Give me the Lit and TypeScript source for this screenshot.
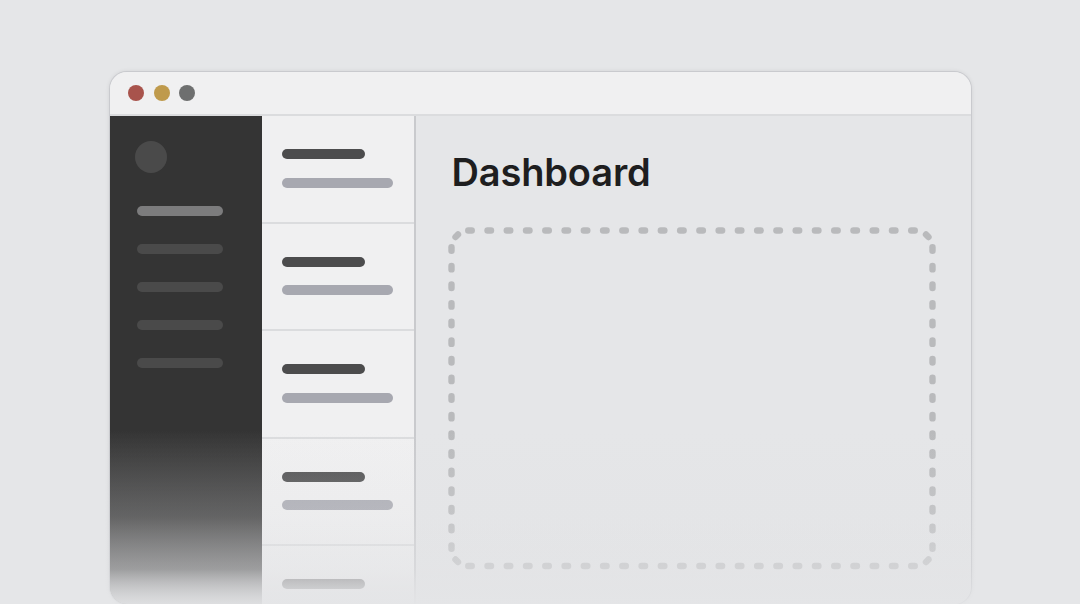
import { LitElement, html, css, svg } from "lit";
import { customElement } from "lit/decorators.js";

const range = (n: number) => Array.from({ length: n }, (_, i) => i);
const DASH = 1.75;

// Dashed frame: each side's dots are evenly spaced and each corner carries one diagonal dot.
const L = 3.5, R = 484.5, T = 3.5, B = 339;
const hx = range(24).map((i) => 22 + i * 19.26);
const vy = range(17).map((i) => 22 + i * 18.63);
const dots = [
  ...hx.flatMap((x) => [[x - DASH, T, x + DASH, T], [x - DASH, B, x + DASH, B]]),
  ...vy.flatMap((y) => [[L, y - DASH, L, y + DASH], [R, y - DASH, R, y + DASH]]),
  [7.5, 10, 10, 7.5],
  [478, 7.5, 480.5, 10],
  [7.5, 332.5, 10, 335],
  [480.5, 332.5, 478, 335],
];

@customElement("app-root")
export class AppRoot extends LitElement {
  static styles = css`
    :host {
      display: block;
      position: relative;
      width: 1080px;
      height: 604px;
      overflow: hidden;
      background: #e5e6e8;
      box-sizing: border-box;
      padding: 72px 0 0 110px;
      font-family: Inter, "Liberation Sans", sans-serif;
    }
    .window {
      position: relative;
      width: 861px;
      height: 532px;
      box-sizing: border-box;
      border-radius: 17px;
      background: #e5e6e8;
      box-shadow: 0 0 0 1px #c9cace, 0 0 5px rgba(0, 0, 0, 0.12);
      display: flex;
      flex-direction: column;
      overflow: hidden;
    }
    .titlebar {
      flex: none;
      height: 44px;
      box-sizing: border-box;
      background: #f0f0f1;
      display: flex;
      align-items: center;
      gap: 9.5px;
      padding: 0 0 1px 18px;
      border-bottom: 2px solid #dbdcde;
    }
    .dot { width: 16px; height: 16px; border-radius: 50%; }
    .dot.r { background: #a8534c; }
    .dot.y { background: #bf9a4c; }
    .dot.g { background: #6e6f6f; }
    .body { flex: 1; display: flex; min-height: 0; }
    .side {
      flex: none;
      width: 152px;
      background: #343434;
      box-sizing: border-box;
      padding: 25px 0 0 27px;
      display: flex;
      flex-direction: column;
    }
    .avatar {
      width: 32px;
      height: 32px;
      margin-left: -2px;
      border-radius: 50%;
      background: #4a4a4a;
      margin-bottom: 33px;
    }
    .navs { display: flex; flex-direction: column; gap: 28px; }
    .nav { width: 85.5px; height: 10px; border-radius: 5px; background: #4a4a4a; }
    .nav.on { background: #7c7c7d; }
    .list {
      flex: none;
      width: 154px;
      box-sizing: border-box;
      background: #f0f0f1;
      border-right: 2px solid #c9cacd;
      display: flex;
      flex-direction: column;
    }
    .item {
      flex: none;
      height: 107.5px;
      box-sizing: border-box;
      border-bottom: 2px solid #dbdcde;
      padding: 33px 0 0 20px;
      display: flex;
      flex-direction: column;
      gap: 18.5px;
    }
    .l1 { width: 82.5px; height: 10px; border-radius: 5px; background: #4c4c4d; }
    .l2 { width: 111px; height: 10px; border-radius: 5px; background: #a7a8b0; }
    .main {
      flex: 1;
      min-width: 0;
      box-sizing: border-box;
      padding: 32px 0 0 32px;
      display: flex;
      flex-direction: column;
      align-items: flex-start;
    }
    h1 {
      margin: 0 0 31px 3.5px;
      font-size: 38px;
      line-height: 48px;
      font-weight: 600;
      letter-spacing: -0.15px;
      color: #1e1e1f;
    }
    svg { display: block; }
    .inner-fade {
      position: absolute;
      left: 0;
      right: 0;
      top: 358px;
      bottom: 0;
      background: linear-gradient(to bottom, rgba(223, 223, 225, 0) 0%, rgba(223, 223, 225, 0.15) 50%, rgba(223, 223, 225, 0.37) 80%, rgba(223, 223, 225, 0.8) 100%);
      pointer-events: none;
    }
    .fade {
      position: absolute;
      left: 0;
      right: 0;
      top: 430px;
      bottom: 0;
      background: linear-gradient(to bottom, rgba(229, 230, 232, 0) 0%, rgba(229, 230, 232, 0.15) 50%, rgba(229, 230, 232, 0.37) 80%, rgba(229, 230, 232, 0.8) 100%);
      pointer-events: none;
    }
  `;

  render() {
    return html`
      <div class="window">
        <div class="titlebar">
          <div class="dot r"></div><div class="dot y"></div><div class="dot g"></div>
        </div>
        <div class="body">
          <div class="side">
            <div class="avatar"></div>
            <div class="navs">
              <div class="nav on"></div>
              ${range(4).map(() => html`<div class="nav"></div>`)}
            </div>
          </div>
          <div class="list">
            ${range(5).map(
              () => html`<div class="item"><div class="l1"></div><div class="l2"></div></div>`
            )}
          </div>
          <div class="main">
            <h1>Dashboard</h1>
            <svg width="488" height="343" viewBox="0 0 488 343">
              ${dots.map(
                ([a, b, c, d]) =>
                  svg`<line x1=${a} y1=${b} x2=${c} y2=${d} stroke="#b9babc" stroke-width="6.4" stroke-linecap="round"></line>`
              )}
            </svg>
          </div>
        </div>
        <div class="inner-fade"></div>
      </div>
      <div class="fade"></div>
    `;
  }
}
